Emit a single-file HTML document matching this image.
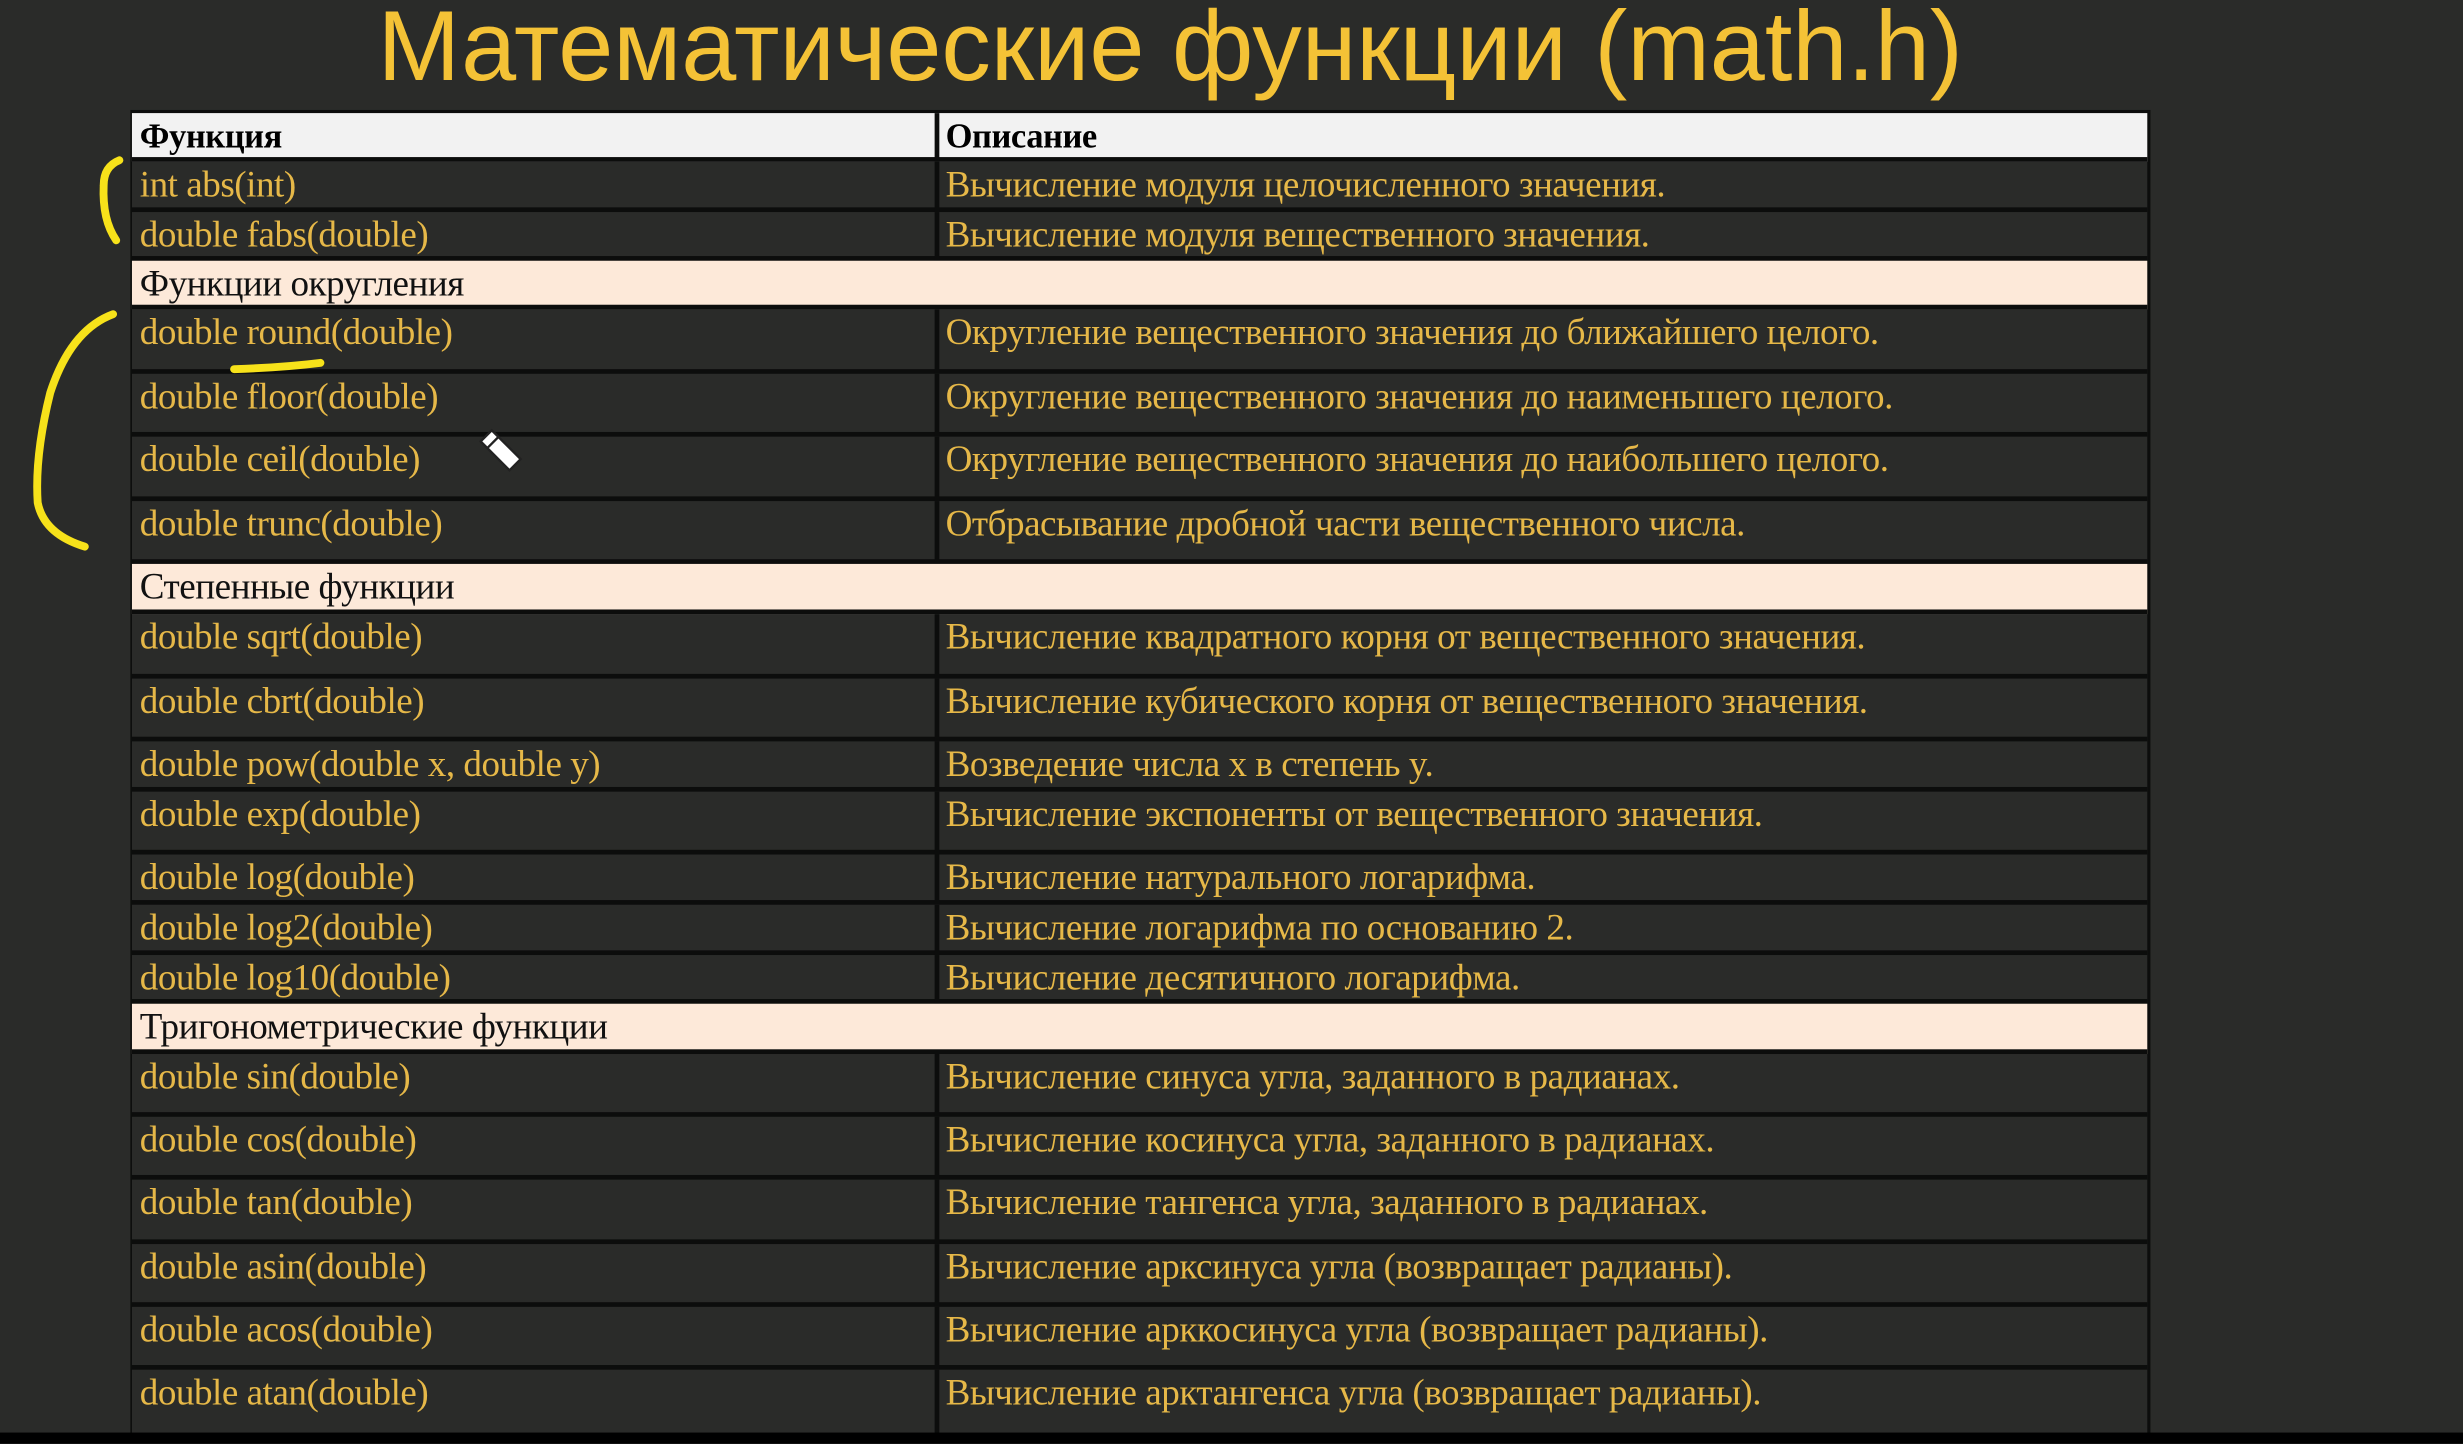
<!DOCTYPE html>
<html><head><meta charset="utf-8"><style>
html,body{margin:0;padding:0;background:#2a2b29;width:2463px;height:1444px;overflow:hidden}
#s{position:absolute;left:0;top:0;width:1568px;height:919px;transform:scale(1.5708);transform-origin:0 0;background:#2a2b29}
.t{position:absolute;left:0;width:1490px;text-align:center;top:-6px;font-family:"Liberation Sans",sans-serif;font-size:63px;color:#f4c236;white-space:nowrap}
.r{position:absolute;left:84px;width:1283px;border-bottom:3px solid #0c0d0c;box-sizing:border-box;font-family:"Liberation Serif","DejaVu Serif",serif;font-size:23.6px;color:#e6b848;letter-spacing:-0.3px}
.r span{position:absolute;top:2px;white-space:nowrap}
.a{left:5px}.b{left:518px}
.r:before{content:"";position:absolute;left:511px;top:0;bottom:-3px;width:3px;background:#0c0d0c}
.h{background:#f2f2f2;color:#000;font-weight:bold;font-size:22px}
.sec{background:#fde9d9;color:#111}
.sec:before{display:none}
.bot{position:absolute;left:0;top:912px;width:1568px;height:7px;background:#000}
.tbl{position:absolute;left:83px;top:70px;width:1286px;height:843px;background:#0c0d0c}
</style></head><body><div id="s">
<div class="t">Математические функции (math.h)</div>
<div class="tbl"></div>
<div class="r h" style="top:72px;height:31px"><span class="a">Функция</span><span class="b">Описание</span></div>
<div class="r" style="top:103px;height:32px;background:#2a2b29"><span class="a">int abs(int)</span><span class="b">Вычисление модуля целочисленного значения.</span></div>
<div class="r" style="top:135px;height:31px;background:#2a2b29"><span class="a">double fabs(double)</span><span class="b">Вычисление модуля вещественного значения.</span></div>
<div class="r sec" style="top:166px;height:31px"><span class="a">Функции округления</span></div>
<div class="r" style="top:197px;height:41px;background:#2a2b29"><span class="a">double round(double)</span><span class="b">Округление вещественного значения до ближайшего целого.</span></div>
<div class="r" style="top:238px;height:40px;background:#2a2b29"><span class="a">double floor(double)</span><span class="b">Округление вещественного значения до наименьшего целого.</span></div>
<div class="r" style="top:278px;height:41px;background:#2a2b29"><span class="a">double ceil(double)</span><span class="b">Округление вещественного значения до наибольшего целого.</span></div>
<div class="r" style="top:319px;height:40px;background:#2a2b29"><span class="a">double trunc(double)</span><span class="b">Отбрасывание дробной части вещественного числа.</span></div>
<div class="r sec" style="top:359px;height:32px"><span class="a">Степенные функции</span></div>
<div class="r" style="top:391px;height:41px;background:#2a2b29"><span class="a">double sqrt(double)</span><span class="b">Вычисление квадратного корня от вещественного значения.</span></div>
<div class="r" style="top:432px;height:40px;background:#2a2b29"><span class="a">double cbrt(double)</span><span class="b">Вычисление кубического корня от вещественного значения.</span></div>
<div class="r" style="top:472px;height:32px;background:#2a2b29"><span class="a">double pow(double x, double y)</span><span class="b">Возведение числа x в степень y.</span></div>
<div class="r" style="top:504px;height:40px;background:#2a2b29"><span class="a">double exp(double)</span><span class="b">Вычисление экспоненты от вещественного значения.</span></div>
<div class="r" style="top:544px;height:32px;background:#2a2b29"><span class="a">double log(double)</span><span class="b">Вычисление натурального логарифма.</span></div>
<div class="r" style="top:576px;height:32px;background:#2a2b29"><span class="a">double log2(double)</span><span class="b">Вычисление логарифма по основанию 2.</span></div>
<div class="r" style="top:608px;height:31px;background:#2a2b29"><span class="a">double log10(double)</span><span class="b">Вычисление десятичного логарифма.</span></div>
<div class="r sec" style="top:639px;height:32px"><span class="a">Тригонометрические функции</span></div>
<div class="r" style="top:671px;height:40px;background:#2a2b29"><span class="a">double sin(double)</span><span class="b">Вычисление синуса угла, заданного в радианах.</span></div>
<div class="r" style="top:711px;height:40px;background:#2a2b29"><span class="a">double cos(double)</span><span class="b">Вычисление косинуса угла, заданного в радианах.</span></div>
<div class="r" style="top:751px;height:41px;background:#2a2b29"><span class="a">double tan(double)</span><span class="b">Вычисление тангенса угла, заданного в радианах.</span></div>
<div class="r" style="top:792px;height:40px;background:#2a2b29"><span class="a">double asin(double)</span><span class="b">Вычисление арксинуса угла (возвращает радианы).</span></div>
<div class="r" style="top:832px;height:40px;background:#2a2b29"><span class="a">double acos(double)</span><span class="b">Вычисление арккосинуса угла (возвращает радианы).</span></div>
<div class="r" style="top:872px;height:41px;background:#2a2b29;border-bottom:none"><span class="a">double atan(double)</span><span class="b">Вычисление арктангенса угла (возвращает радианы).</span></div>
<div class="bot"></div>
<svg style="position:absolute;left:0;top:0" width="1568" height="919">
<g fill="none" stroke="#f7e21a" stroke-linecap="round" stroke-width="5">
<path d="M76 102 Q66 106 66 118 Q65 140 74 153"/>
<path d="M72 200 Q45 210 32 250 Q22 290 24 320 Q28 340 54 348"/>
<path d="M149 235 Q180 234 204 231"/>
</g>
<g transform="translate(306,281) rotate(-45)">
<rect x="0" y="0" width="10" height="26" fill="#fff" stroke="#222" stroke-width="1.5"/>
<path d="M0 6 L10 6" stroke="#222" stroke-width="1.5"/>
</g>
</svg>
</div></body></html>
